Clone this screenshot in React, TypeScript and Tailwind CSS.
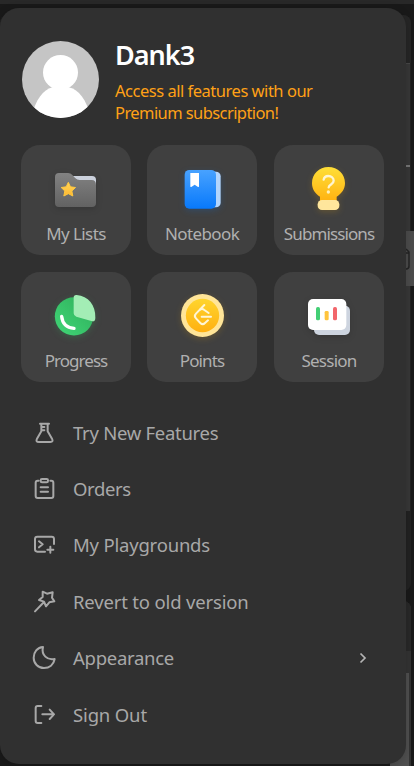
import type { ReactNode } from "react";

const font = "font-['Noto_Sans',sans-serif]";

function FolderIcon() {
  return (
    <svg width="60" height="56" viewBox="108 69 180 168" className="drop-shadow-[0_2px_3px_rgba(0,0,0,0.15)]">
      <defs>
        <linearGradient id="folder" x1="0" y1="0" x2="0" y2="1">
          <stop stopColor="#828282" />
          <stop offset="1" stopColor="#626262" />
        </linearGradient>
        <linearGradient id="star" x1="0" y1="0" x2="0" y2="1">
          <stop stopColor="#ffd65c" />
          <stop offset="1" stopColor="#ffb72f" />
        </linearGradient>
      </defs>
      <path d="M185 123h61q12 0 12 12v20h-30z" fill="#cbd1dc" />
      <path d="M147 114h27q8 0 13 6l9 10q5 5 13 5h36q13 0 13 15v54q0 12-12 12h-99q-12 0-12-12v-78q0-12 12-12z" fill="url(#folder)" />
      <path d="M175 142l6.500 13.500 15 2-11 10.500 3 15-13.500-7-13.500 7 3-15-11-10.500 15-2z" fill="url(#star)" stroke="#ffc83f" strokeWidth="3" strokeLinejoin="round" />
    </svg>
  );
}

function NotebookIcon() {
  return (
    <svg width="60" height="56" viewBox="96 69 180 168" className="drop-shadow-[0_2px_3px_rgba(0,122,255,0.2)]">
      <defs>
        <linearGradient id="book" x1="0" y1="0" x2="0" y2="1">
          <stop stopColor="#48a2ff" />
          <stop offset="1" stopColor="#0879fb" />
        </linearGradient>
      </defs>
      <rect x="190" y="110" width="52" height="107" rx="14" fill="#b3d5fc" />
      <rect x="134" y="105" width="94" height="116" rx="14" fill="url(#book)" />
      <path d="M151 114h26v40q0 4-4 1l-9-6-9 6q-4 3-4-1z" fill="#fff" />
    </svg>
  );
}

function BulbIcon() {
  return (
    <svg width="60" height="56" viewBox="102 69 180 168" className="drop-shadow-[0_2px_3px_rgba(255,180,0,0.18)]">
      <defs>
        <linearGradient id="bulb" x1="0" y1="0" x2="0" y2="1">
          <stop stopColor="#ffdf38" />
          <stop offset="1" stopColor="#ffb00f" />
        </linearGradient>
      </defs>
      <path d="M190 96c29 0 50 21 50 48 0 19-10 31-25 41v19h-50v-19c-15-10-24-22-24-41 0-27 21-48 49-48z" fill="url(#bulb)" />
      <rect x="158" y="195" width="65" height="30" rx="13" fill="#ffe69c" />
      <path d="M176 134c1-7 7-11 14-11 9 0 16 6 16 14 0 11-14 11-15 20" fill="none" stroke="#fff5d0" strokeWidth="7" strokeLinecap="round" />
      <circle cx="190" cy="171" r="5" fill="#fff0b8" />
    </svg>
  );
}

function ProgressIcon() {
  return (
    <svg width="60" height="56" viewBox="108 69 180 168" className="drop-shadow-[0_2px_3px_rgba(45,181,93,0.25)]">
      <defs>
        <linearGradient id="disc" x1="0" y1="1" x2="1" y2="0">
          <stop stopColor="#40d777" />
          <stop offset="1" stopColor="#2fad5a" />
        </linearGradient>
      </defs>
      <circle cx="192" cy="163" r="57.500" fill="url(#disc)" />
      <path d="M191 107q0-9 9-8c35 3 57 30 56 68q0 14-12 10l-45-13q-8-2-8-10z" fill="#a3edb5" />
      <path d="M155 163c2 21 15 34 37 36" fill="none" stroke="#fff" strokeWidth="10" strokeLinecap="round" />
    </svg>
  );
}

function PointsIcon() {
  return (
    <svg width="60" height="56" viewBox="96 69 180 168" className="drop-shadow-[0_2px_3px_rgba(255,180,0,0.18)]">
      <defs>
        <linearGradient id="coin" x1="0" y1="0" x2="0" y2="1">
          <stop stopColor="#ffd52e" />
          <stop offset="1" stopColor="#ffb010" />
        </linearGradient>
      </defs>
      <circle cx="187.500" cy="160.500" r="64.500" fill="#ffe598" />
      <circle cx="187.500" cy="160.500" r="50" fill="url(#coin)" />
      <g fill="none" stroke="#fff6d5" strokeWidth="6" strokeLinecap="round" strokeLinejoin="round">
        <path d="M193 129l-25 26q-7 7 0 14l13 14q7 7 14 0l9-8" />
        <path d="M180 143q7-4 13 1l13 9" />
        <path d="M185 164h28" />
      </g>
    </svg>
  );
}

function SessionIcon() {
  return (
    <svg width="60" height="56" viewBox="102 69 180 168" className="drop-shadow-[0_2px_3px_rgba(0,0,0,0.15)]">
      <rect x="147" y="131" width="108" height="88" rx="15" fill="#cdd4df" />
      <rect x="129" y="111" width="115" height="93" rx="15" fill="#fff" />
      <rect x="153" y="135" width="12" height="40" rx="5" fill="#43cf75" />
      <rect x="179" y="147" width="12" height="28" rx="4" fill="#ffc43d" />
      <rect x="204" y="135" width="12" height="40" rx="5" fill="#f2666b" />
    </svg>
  );
}

function LineIcon({ viewBox, children }: { viewBox: string; children: ReactNode }) {
  return (
    <svg width="28" height="28" viewBox={viewBox} fill="none" stroke="#a8a8a8" strokeWidth="6" strokeLinecap="round" strokeLinejoin="round" className="shrink-0">
      {children}
    </svg>
  );
}

const tiles = [
  { label: "My Lists", icon: <FolderIcon />, tracking: "tracking-[-0.6px]" },
  { label: "Notebook", icon: <NotebookIcon />, tracking: "tracking-[-0.6px]" },
  { label: "Submissions", icon: <BulbIcon />, tracking: "tracking-[-0.9px]" },
  { label: "Progress", icon: <ProgressIcon />, tracking: "tracking-[-0.95px]" },
  { label: "Points", icon: <PointsIcon />, tracking: "tracking-[-0.9px]" },
  { label: "Session", icon: <SessionIcon />, tracking: "tracking-[-0.75px]" },
];

const items = [
  {
    label: "Try New Features",
    tracking: "tracking-[-0.28px]",
    icon: (
      <LineIcon viewBox="30 42 84 84">
        <path d="M60 56h27M64 57v22L51 101q-5 10 6 10h34q10 0 5-10L83 79V57M65 66h8M65 76h8" />
      </LineIcon>
    ),
  },
  {
    label: "Orders",
    tracking: "tracking-[-0.4px]",
    icon: (
      <LineIcon viewBox="30 210 84 84">
        <path d="M56 227h-3q-6 0-6 6v40q0 6 6 6h41q6 0 6-6v-40q0-6-6-6h-3M62 247h22M62 260h22" />
        <rect x="62" y="222" width="22" height="10" rx="4" />
      </LineIcon>
    ),
  },
  {
    label: "My Playgrounds",
    tracking: "tracking-[-0.2px]",
    icon: (
      <LineIcon viewBox="30 378 84 84">
        <path d="M75 440H52q-7 0-7-7v-31q0-7 7-7h43q7 0 7 7v15M57 409l11 9-11 9M91 425v18M82 434h18" />
      </LineIcon>
    ),
  },
  {
    label: "Revert to old version",
    tracking: "tracking-[-0.17px]",
    icon: (
      <LineIcon viewBox="30 39 84 84">
        <path d="M45 109l27-28M68 50l13 6 17-4-2 16 7 11-15 3-10 12-6-14-15-5 11-9z" />
      </LineIcon>
    ),
  },
  {
    label: "Appearance",
    tracking: "tracking-[-0.28px]",
    icon: (
      <LineIcon viewBox="30 207 84 84">
        <path d="M69 216c-17 1-28 16-28 32 0 17 13 31 31 31 16 0 29-10 32-27-22 5-41-12-35-36z" />
      </LineIcon>
    ),
  },
  {
    label: "Sign Out",
    tracking: "tracking-[-0.15px]",
    icon: (
      <LineIcon viewBox="30 378 84 84">
        <path d="M64 393H53q-6 0-6 6v39q0 6 6 6h11M67 418h35M89 404l13 14-13 14" />
      </LineIcon>
    ),
  },
];

function Backdrop() {
  return (
    <div className="flex h-full flex-col">
      <div className="h-1 shrink-0 bg-[#282828]" />
      <div className="h-[11px] shrink-0" />
      <div className="mr-[3px] flex h-[576px] shrink-0 flex-col overflow-hidden rounded-lg bg-[#222222]">
        <div className="h-12 bg-[#262626]" />
        <div className="mr-px h-[448px] border-t border-[#484848] bg-[#383838]">
          <div className="mt-[101px] h-0.5 bg-[#777777]" />
        </div>
      </div>
      <div className="h-2.5 shrink-0" />
      <div className="mr-[3px] flex grow flex-col overflow-hidden rounded-t-lg bg-[#333333]">
        <div className="h-[50px] bg-[#292929]" />
        <div className="mt-[22px] mr-0.5 ml-[390px] grow bg-[#505050]" />
      </div>
    </div>
  );
}

export default function App() {
  return (
    <div className={`relative h-[766px] w-[414px] overflow-hidden bg-[#191919] ${font}`}>
      <Backdrop />
      <div className="absolute bottom-0 left-0 h-8 w-[390px] bg-[#1a1a1a]" />
      <div className="absolute top-[231px] right-0 flex h-[55px] w-2 items-center bg-[#4c4c4c]">
        <svg width="4" height="22" viewBox="0 0 4 22" fill="none" stroke="#252525" strokeWidth="1.5">
          <path d="M0 1l3 3v14q0 3-3 3M0 5h3" />
        </svg>
      </div>

      <main className="absolute top-2 left-0 h-[755.5px] w-[406px] rounded-[19px] bg-[#303030] shadow-[0_2px_10px_rgba(0,0,0,0.2)]">
        <header className="flex h-[137px] pt-[33px] pl-[22px]">
          <svg width="77" height="77" viewBox="0 0 77 77" className="shrink-0">
            <defs>
              <clipPath id="avatar">
                <circle cx="38.5" cy="38.5" r="38.5" />
              </clipPath>
            </defs>
            <g clipPath="url(#avatar)">
              <path fill="#c5c5c5" d="M0 0h77v77H0z" />
              <circle cx="38.5" cy="31.500" r="17.500" fill="#fff" />
              <path d="M11 70C16 54 25 46 33 46h11c9 0 18 8 23 24v8H11z" fill="#fff" />
            </g>
          </svg>
          <div className="ml-4 whitespace-nowrap">
            <h1 className="-mt-[3px] h-[34px] text-[27px] leading-[33px] font-semibold tracking-[-1px] text-white">
              <span>Dank3</span>
            </h1>
            <p className="mt-[8px] text-[16.5px] leading-[22px] text-[#ffa116]">
              <span className="tracking-[-0.48px]">Access all features with our</span>
              <br />
              <span className="tracking-[-0.58px]">Premium subscription!</span>
            </p>
          </div>
        </header>

        <section className="ml-[21px] grid w-[363px] grid-cols-[126px_127px_110px] gap-y-[17px]">
          {tiles.map((t) => (
            <div key={t.label} className="flex h-[110px] w-[110px] flex-col items-center rounded-[19px] bg-[#404040] pt-[13px]">
              {t.icon}
              <span className={`mt-2 text-[17px] leading-6 whitespace-nowrap text-[#b0b0b0] ${t.tracking}`}>{t.label}</span>
            </div>
          ))}
        </section>

        <nav className="mt-[22.4px]">
          {items.map((it) => (
            <div key={it.label} className="flex h-[56.4px] items-center pl-[30px]">
              {it.icon}
              <span className={`ml-[15px] text-[18.5px] leading-6 whitespace-nowrap text-[#a8a8a8] ${it.tracking}`}>{it.label}</span>
              {it.label === "Appearance" && (
                <svg width="8" height="12" viewBox="0 0 8 12" fill="none" stroke="#b5b5b5" strokeWidth="1.700" className="mr-[39px] ml-auto">
                  <path d="M1.500 1.500L6 6l-4.500 4.500" />
                </svg>
              )}
            </div>
          ))}
        </nav>
      </main>
    </div>
  );
}
